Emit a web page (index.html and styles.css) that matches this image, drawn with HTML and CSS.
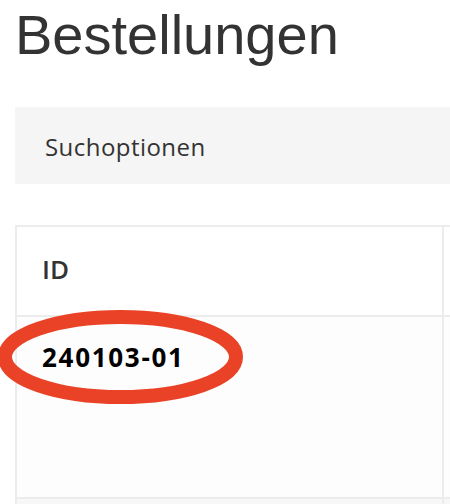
FILE: index.html
```html
<!DOCTYPE html>
<html lang="de">
<head>
<meta charset="utf-8">
<title>Bestellungen</title>
<link rel="stylesheet" href="styles.css">
</head>
<body>
<main class="page">
  <h1 class="title">Bestellungen</h1>
  <section class="search-panel">
    <span class="search-label">Suchoptionen</span>
  </section>
  <div class="table">
    <div class="row head">
      <div class="cell id-cell">ID</div>
      <div class="cell rest"></div>
    </div>
    <div class="row data">
      <div class="cell id-cell">
        <span class="order-id">240103-01</span>
        <svg class="mark" width="260" height="110" viewBox="0 0 260 110" aria-hidden="true">
          <ellipse cx="120.5" cy="57" rx="115.5" ry="40" fill="none" stroke="#e94227" stroke-width="14"/>
        </svg>
      </div>
      <div class="cell rest"></div>
    </div>
    <div class="row stripe">
      <div class="cell id-cell"></div>
      <div class="cell rest"></div>
    </div>
  </div>
</main>
</body>
</html>
```

FILE: styles.css
```css
html, body {
  margin: 0;
  padding: 0;
  background: #ffffff;
  overflow: hidden;
}

.page {
  padding-left: 15px;
  height: 504px;
  box-sizing: border-box;
  overflow: hidden;
}

.title {
  margin: 7px 0 0 0;
  font-family: "Liberation Sans", Arial, sans-serif;
  font-weight: 400;
  font-size: 56px;
  line-height: 56px;
  color: #333333;
}

.search-panel {
  margin-top: 44px;
  height: 77px;
  box-sizing: border-box;
  padding: 23px 0 0 30px;
  background: #f5f5f5;
}

.search-label {
  font-family: "Open Sans", sans-serif;
  font-size: 24px;
  letter-spacing: 0.45px;
  color: #333333;
}

.table {
  margin-top: 41px;
  border-top: 2px solid #ececec;
  border-left: 2px solid #ececec;
  font-family: "Open Sans", sans-serif;
}

.row {
  display: flex;
  border-bottom: 2px solid #ececec;
}

.cell {
  box-sizing: border-box;
}

.id-cell {
  flex: 0 0 427px;
  border-right: 2px solid #ececec;
  padding-left: 25px;
  position: relative;
}

.rest {
  flex: 1;
}

.head {
  height: 88px;
}

.head .id-cell {
  padding-top: 24px;
  font-size: 26px;
  font-weight: 600;
  color: #333333;
  line-height: normal;
}

.data {
  height: 180px;
  background: #fdfdfd;
}

.data .id-cell {
  padding-top: 22px;
  padding-left: 25px;
}

.order-id {
  font-size: 26px;
  font-weight: 700;
  letter-spacing: 1.7px;
  color: #000000;
}

.mark {
  position: absolute;
  left: -17px;
  top: -17px;
  overflow: visible;
}

.stripe {
  height: 5px;
  background: #f7f7f7;
  border-bottom: none;
}
```
